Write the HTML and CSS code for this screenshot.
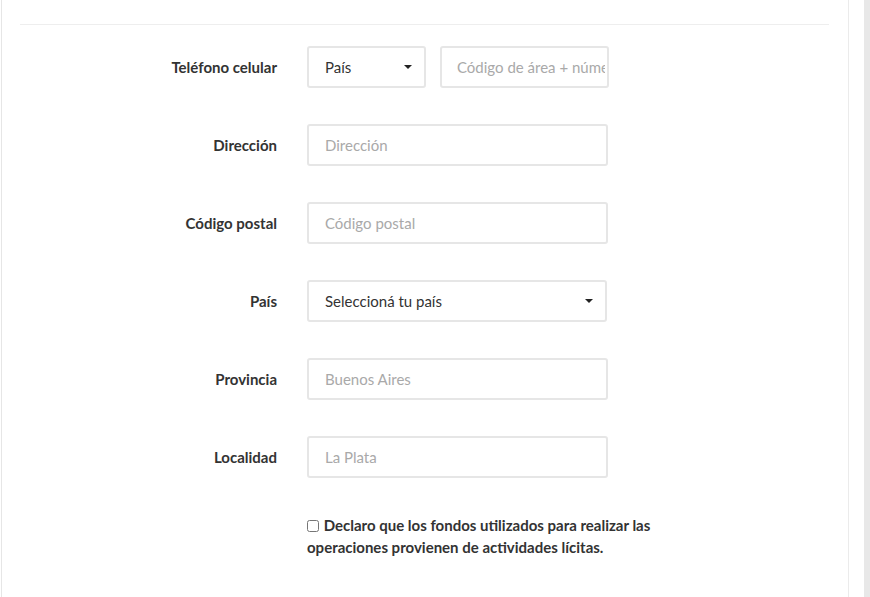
FILE: index.html
```html
<!DOCTYPE html>
<html lang="es">
<head>
<meta charset="utf-8">
<title>Formulario</title>
<link rel="stylesheet" href="styles.css">
</head>
<body>
<div class="page">
  <div class="panel">
    <hr class="divider">
    <form class="form">
      <label class="label" for="tel">Teléfono celular</label>
      <div class="field phone">
        <div class="select-wrap small">
          <select class="control select" id="pais-tel">
            <option>País</option>
          </select>
          <span class="caret"></span>
        </div>
        <input class="control phone-input" id="tel" type="text" placeholder="Código de área + número">
      </div>

      <label class="label" for="dir">Dirección</label>
      <div class="field"><input class="control wide" id="dir" type="text" placeholder="Dirección"></div>

      <label class="label" for="cp">Código postal</label>
      <div class="field"><input class="control wide" id="cp" type="text" placeholder="Código postal"></div>

      <label class="label" for="pais">País</label>
      <div class="field">
        <div class="select-wrap country">
          <select class="control select" id="pais">
            <option>Seleccioná tu país</option>
          </select>
          <span class="caret"></span>
        </div>
      </div>

      <label class="label" for="prov">Provincia</label>
      <div class="field"><input class="control wide" id="prov" type="text" placeholder="Buenos Aires"></div>

      <label class="label" for="loc">Localidad</label>
      <div class="field"><input class="control wide" id="loc" type="text" placeholder="La Plata"></div>

      <div class="check-row">
        <label class="check-label"><input type="checkbox" class="check"> Declaro que los fondos utilizados para realizar las operaciones provienen de actividades lícitas.</label>
      </div>
    </form>
  </div>
  <div class="gutter"></div>
  <div class="scrollbar"></div>
</div>
</body>
</html>
```

FILE: styles.css
```css
* { box-sizing: border-box; }

html, body {
  margin: 0;
  padding: 0;
  height: 597px;
  overflow: hidden;
  background: #ffffff;
  font-family: Lato, "Liberation Sans", sans-serif;
  color: #333333;
}

.page {
  display: flex;
  height: 597px;
  padding-left: 1px;
}

.panel {
  width: 848px;
  flex: none;
  border-left: 1px solid #e6e6e6;
  border-right: 1px solid #ebebeb;
  background: #ffffff;
  height: 100%;
  overflow: hidden;
}

.gutter {
  width: 15px;
  flex: none;
}

.scrollbar {
  width: 6px;
  flex: none;
  background: #e8e8e8;
}

.divider {
  margin: 24px 19px 0 18px;
  border: 0;
  height: 1px;
  background: #eeeeee;
}

.form {
  display: grid;
  grid-template-columns: 275px 1fr;
  column-gap: 30px;
  row-gap: 36px;
  margin-top: 21px;
  align-items: center;
}

.label {
  text-align: right;
  font-weight: 700;
  font-size: 15px;
  color: #333333;
  line-height: 42px;
}

.field {
  display: flex;
  gap: 14px;
  height: 42px;
}

.control {
  height: 42px;
  border: 2px solid #e6e6e6;
  border-radius: 3px;
  background: #ffffff;
  padding: 0 16px;
  font-family: Lato, "Liberation Sans", sans-serif;
  font-size: 15px;
  color: #333333;
  outline: none;
  margin: 0;
}

.control::placeholder {
  color: #a9a9a9;
  opacity: 1;
}

.wide { width: 301px; }

.phone-input { width: 169px; padding: 0 2px 0 15px; }

.select-wrap {
  position: relative;
  height: 42px;
}

.select-wrap.small { width: 119px; }
.select-wrap.country { width: 300px; }

.select {
  width: 100%;
  -webkit-appearance: none;
  appearance: none;
  cursor: pointer;
}

.caret {
  position: absolute;
  top: 19px;
  right: 14px;
  width: 0;
  height: 0;
  border-left: 4px solid transparent;
  border-right: 4px solid transparent;
  border-top: 4px solid #222222;
  pointer-events: none;
}

.check-row {
  grid-column: 2;
  width: 372px;
}

.check-label {
  font-size: 15px;
  font-weight: 700;
  line-height: 22px;
  color: #333333;
}

.check {
  width: 12px;
  height: 12px;
  margin: 0 1px 0 0;
  vertical-align: -1px;
}
```
